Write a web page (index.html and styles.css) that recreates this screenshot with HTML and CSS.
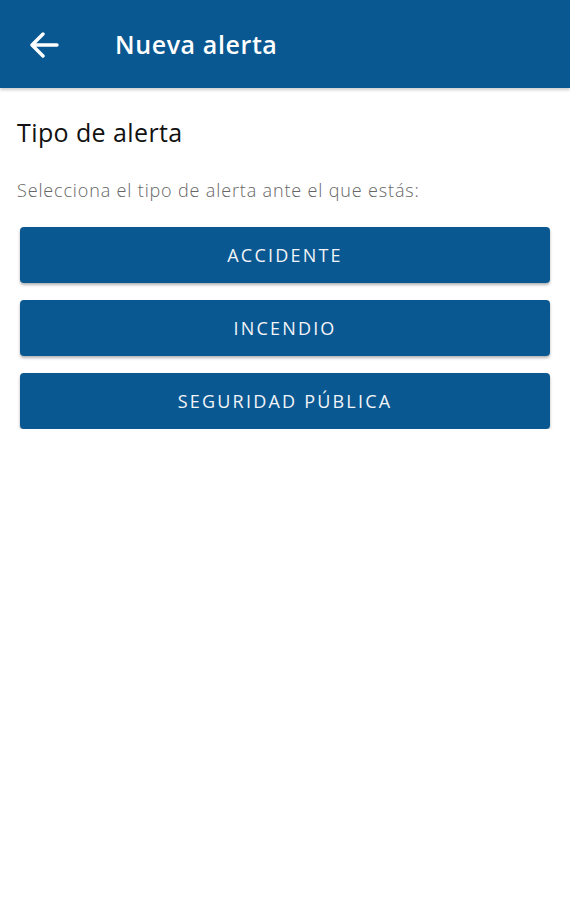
FILE: index.html
```html
<!DOCTYPE html>
<html lang="es">

<head>
    <meta charset="UTF-8">
    <meta name="viewport" content="width=device-width, initial-scale=1.0">
    <title>Nueva alerta</title>
    <link rel="stylesheet" href="styles.css">
</head>

<body>
    <header class="toolbar">
        <div class="back">
            <svg width="30" height="26" viewBox="0 0 30 26">
                <path d="M28 13H4M14 2L3 13l11 11" fill="none" stroke="#fff" stroke-width="3.4" stroke-linecap="round" stroke-linejoin="round"/>
            </svg>
        </div>
        <h1>Nueva alerta</h1>
    </header>
    <div class="content">
        <h2>Tipo de alerta</h2>
        <p class="hint">Selecciona el tipo de alerta ante el que estás:</p>
        <div class="options">
            <div class="option">ACCIDENTE</div>
            <div class="option">INCENDIO</div>
            <div class="option">SEGURIDAD PÚBLICA</div>
        </div>
    </div>
</body>

</html>
```

FILE: styles.css
```css
body {
    margin: 0;
    font-family: "Open Sans", Lato, sans-serif;
    background: #fff;
}

.toolbar {
    height: 88px;
    background-color: #0a5891;
    display: flex;
    align-items: center;
    box-shadow: 0 2px 3px rgba(0, 0, 0, 0.2);
}

.back {
    width: 30px;
    height: 26px;
    margin-left: 29px;
    margin-top: 1px;
}

.toolbar h1 {
    margin: 0 0 0 56px;
    color: #fff;
    font-size: 25px;
    font-weight: 600;
    letter-spacing: 0.6px;
}

.content {
    padding: 0 20px 0 17px;
}

h2 {
    margin: 27px 0 0;
    font-size: 25px;
    font-weight: 400;
    letter-spacing: 0.4px;
    color: #111;
}

.hint {
    margin: 29px 0 0;
    font-size: 18px;
    font-weight: 300;
    letter-spacing: 0.85px;
    color: #666;
}

.options {
    display: flex;
    flex-direction: column;
    gap: 17px;
    margin: 25px 0 0 3px;
}

.option {
    height: 56px;
    display: flex;
    align-items: center;
    justify-content: center;
    background-color: #0a5891;
    border-radius: 4px;
    box-shadow: 0 2px 3px rgba(0, 0, 0, 0.3);
    color: #f2f4f8;
    font-size: 18px;
    font-weight: 500;
    letter-spacing: 2.2px;
}
```
